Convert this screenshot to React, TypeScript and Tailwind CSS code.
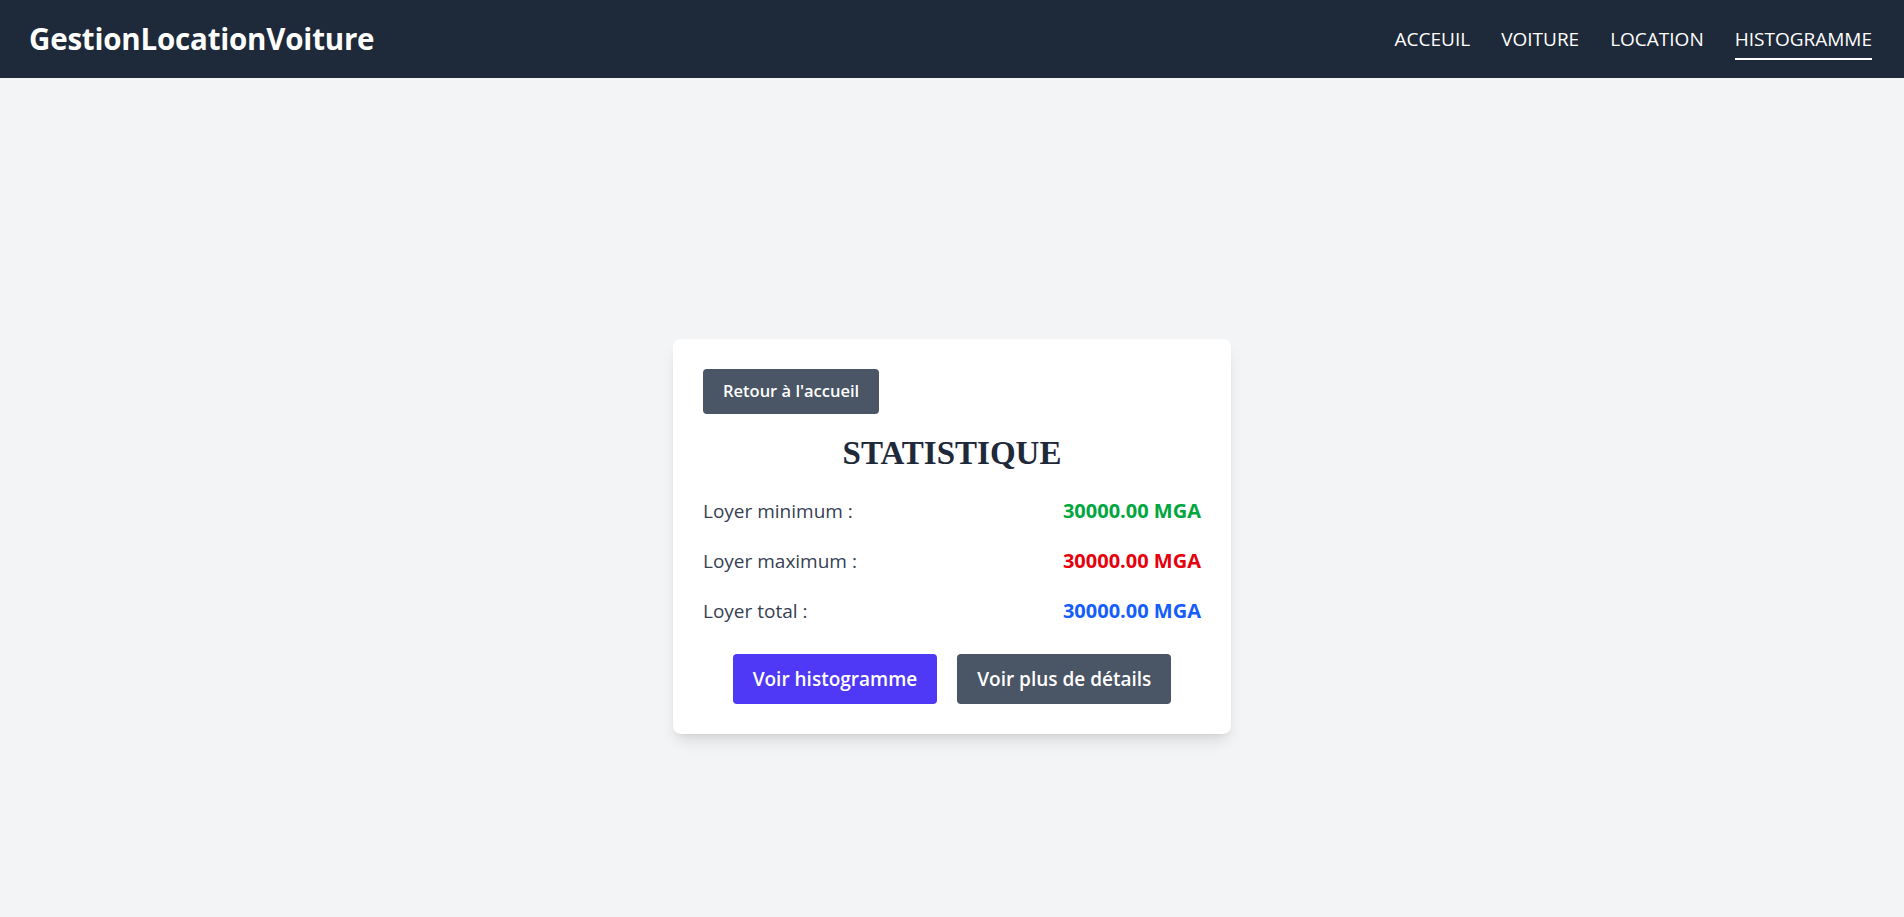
const stats = [
  { label: 'Loyer minimum :', value: '30000.00 MGA', color: 'text-[#00a63e]' },
  { label: 'Loyer maximum :', value: '30000.00 MGA', color: 'text-[#e7000b]' },
  { label: 'Loyer total :', value: '30000.00 MGA', color: 'text-[#155dfc]' },
];

const links = ['ACCEUIL', 'VOITURE', 'LOCATION', 'HISTOGRAMME'];

export default function App() {
  return (
    <div className="min-h-screen bg-[#f3f4f6] font-['Open_Sans',_'Noto_Sans',_sans-serif]">
      {/* Navbar */}
      <nav className="h-[78px] bg-[#1e2939] pl-[29px] pr-8 flex items-center justify-between text-white">
        <h1 className="text-[29.5px] font-bold tracking-[-0.2px]">GestionLocationVoiture</h1>
        <ul className="flex items-center gap-[31px] text-[19px]">
          {links.map((l) => (
            <li key={l}>
              <a
                href="#"
                className={
                  l === 'HISTOGRAMME'
                    ? 'block border-b-2 border-white pb-[5px] pt-[7px]'
                    : 'block pb-[5px] pt-[7px] border-b-2 border-transparent'
                }
              >
                {l}
              </a>
            </li>
          ))}
        </ul>
      </nav>

      {/* Main */}
      <main className="min-h-screen flex items-center justify-center">
        <div className="w-[558px] bg-white rounded-lg shadow-lg p-[30px]">
          <button className="h-[45px] px-5 bg-[#4a5565] text-white text-[16.5px] font-semibold rounded">
            Retour à l'accueil
          </button>

          <h2 className="mt-[19px] text-center text-[33px] leading-10 font-bold text-[#1e2939] font-['Liberation_Serif',_serif]">
            STATISTIQUE
          </h2>

          <div className="mt-[24px] flex flex-col gap-[22px]">
            {stats.map((s) => (
              <div key={s.label} className="flex justify-between items-center text-[19px] leading-7">
                <span className="font-medium text-[#364153]">{s.label}</span>
                <span className={`font-bold text-[20px] ${s.color}`}>{s.value}</span>
              </div>
            ))}
          </div>

          <div className="mt-[29px] flex justify-center gap-5">
            <button className="h-[50px] px-5 bg-[#4f39f6] text-white text-[19px] font-semibold rounded">
              Voir histogramme
            </button>
            <button className="h-[50px] px-5 bg-[#4a5565] text-white text-[19px] font-semibold rounded">
              Voir plus de détails
            </button>
          </div>
        </div>
      </main>
    </div>
  );
}
